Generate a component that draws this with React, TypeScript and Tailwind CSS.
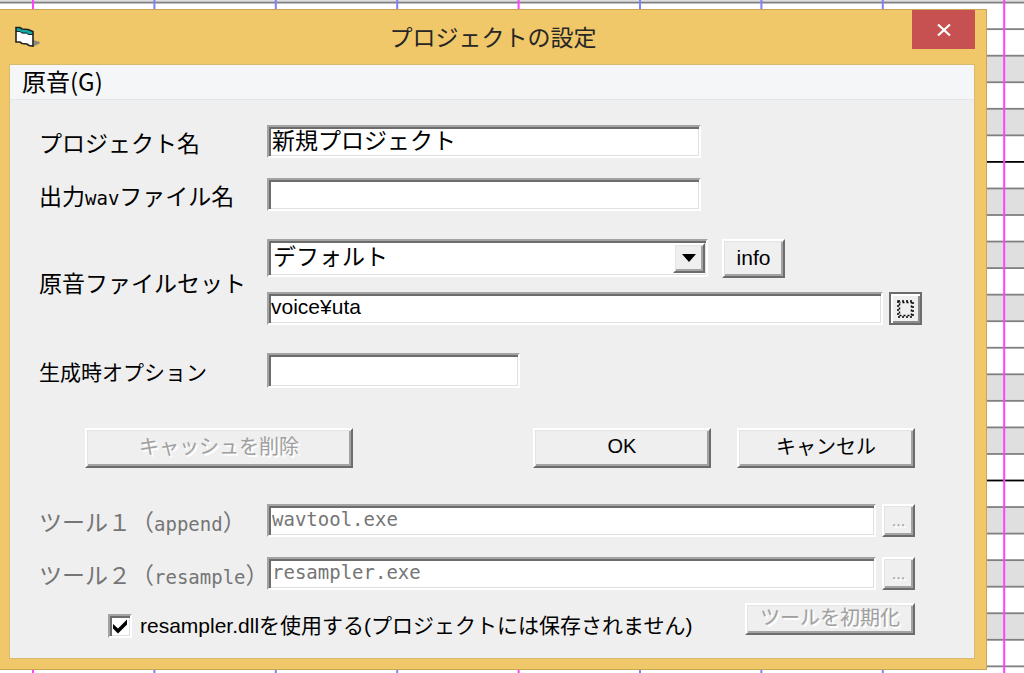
import React, { useState } from 'react';

const SUNKEN =
  'bg-white border-2 border-t-[#a3a3a3] border-l-[#a3a3a3] border-r-white border-b-white shadow-[inset_2px_2px_0_#6c6c6c,inset_-1px_-1px_0_#e0e0e0] outline-none';
const RAISED =
  'bg-[#efefef] border-2 border-t-white border-l-white border-r-[#6c6c6c] border-b-[#6c6c6c] shadow-[inset_1px_1px_0_#e3e3e3,inset_-2px_-2px_0_#a3a3a3]';
const DISABLED = 'text-[#a0a0a0] [text-shadow:2px_2px_0_#fff]';
const LABEL = 'h-7 w-[228px] shrink-0 whitespace-nowrap';
const LATIN = "font-['Liberation_Sans','Noto_Sans_CJK_JP',sans-serif]";
const MONO = "font-['DejaVu_Sans_Mono','Noto_Sans_CJK_JP',monospace] text-[19px]";

const ROW_HEIGHT = 26.55;
const SHADED_ROWS = [-1, 2, 4, 7, 9, 11, 14, 16, 19, 21, 23];
const OCTAVE_LINES = [6, 18];

const PianoRoll: React.FC = () => (
  <svg className="absolute inset-0 w-full h-full" aria-hidden="true">
    <rect width="100%" height="100%" fill="#fff" />
    {SHADED_ROWS.map((row) => (
      <rect key={row} x="0" y={2.5 + row * ROW_HEIGHT} width="100%" height={ROW_HEIGHT} fill="#dfdfdf" />
    ))}
    {Array.from({ length: 26 }, (_, i) => (
      <rect
        key={i}
        x="0"
        y={1.7 + i * ROW_HEIGHT}
        width="100%"
        height="1.8"
        fill={OCTAVE_LINES.includes(i) ? '#000' : '#808080'}
      />
    ))}
    {Array.from({ length: 9 }, (_, i) => (
      <rect
        key={i}
        x={32 + i * 121.4}
        y="0"
        width="2"
        height="100%"
        fill={i % 4 === 0 ? '#ff40ff' : '#8080ff'}
      />
    ))}
  </svg>
);

const FormIcon: React.FC = () => (
  <svg width="26" height="24" viewBox="0 0 26 24" aria-hidden="true">
    <path d="M19 15 L26 17 L25 19 L20 21 Z" fill="#8e8878" />
    <path d="M2 2.500 H6 L8 4 L14 4.500 L19 6.500 V21 L15 20.500 L13 19 L8 18.500 L6 17 H2 Z" fill="#fff" />
    <path d="M2 2.500 H6 L8 4 L14 4.500 L19 6.500 V10 H14.500 L12.500 8.500 H8 L6 6.500 H2 Z" fill="#10aaa6" />
    <path d="M2 6.500 H6 L8 8 H12.500 L14.500 9.500 H19" fill="none" stroke="#222" strokeWidth="1" />
    <path d="M2 2.500 H6 L8 4 L14 4.500 L19 6.500 V21 L15 20.500 L13 19 L8 18.500 L6 17 H2 Z" fill="none" stroke="#222" strokeWidth="1.600" />
  </svg>
);

// Dotted focus rectangle around the missing caption of the browse button
const FocusBox: React.FC = () => (
  <svg width="17" height="18" viewBox="0 0 17 18" aria-hidden="true">
    <rect x="1" y="1" width="15" height="16" fill="none" stroke="#000" strokeWidth="1.500" strokeDasharray="2 2" />
    <rect x="2.500" y="2.500" width="12" height="13" fill="none" stroke="#000" strokeWidth="1.500" strokeDasharray="2 2" strokeDashoffset="1" />
  </svg>
);

interface ToolRowProps {
  id: string;
  name: string;
  kind: string;
  value: string;
}

const ToolRow: React.FC<ToolRowProps> = ({ id, name, kind, value }) => (
  <div className="flex items-center pr-[7px]">
    <label htmlFor={id} className={`${LABEL} text-[#757575]`}>
      {name}（<span className={MONO}>{kind}</span>）
    </label>
    <input id={id} disabled defaultValue={value} className={`${SUNKEN} ${MONO} h-[33px] min-w-0 flex-1 px-[3px] pb-1 text-[#757575]`} />
    <button disabled className={`${RAISED} ${DISABLED} ${LATIN} ml-1.5 h-[33px] w-[33px] shrink-0 text-base leading-6`}>
      ...
    </button>
  </div>
);

const App: React.FC = () => {
  const [project, setProject] = useState('新規プロジェクト');
  const [output, setOutput] = useState('');
  const [voice, setVoice] = useState('voice¥uta');
  const [options, setOptions] = useState('');

  return (
    <div className="relative min-h-screen overflow-hidden pt-[9px] font-['Noto_Sans_CJK_JP',sans-serif] text-[23px] leading-7 text-black">
      <PianoRoll />

      <main className="relative mr-[37px] border-y border-r border-[#c9a555] bg-[#f0c869] pl-[9px] pr-[11px] pb-[10px]">
        <header className="flex h-[54px]">
          <div className="w-[65px] shrink-0 pt-[15px] pl-[5px]">
            <FormIcon />
          </div>
          <h1 className="flex-1 self-center pb-0.5 text-center text-[#262626]">プロジェクトの設定</h1>
          <button aria-label="閉じる" className="flex h-[39px] w-[63px] shrink-0 items-center justify-center bg-[#c75050]">
            <svg width="14" height="12" viewBox="0 0 14 12" aria-hidden="true">
              <path d="M1 0.500 L13 11.500 M13 0.500 L1 11.500" stroke="#fff" strokeWidth="2.200" />
            </svg>
          </button>
        </header>

        <div className="border border-[#d8b970] bg-[#efefef]">
          <nav className="h-[35px] border-b border-[#e3e5e8] bg-[#f5f6f8] pl-3">
            <button className="block h-8 text-2xl leading-8">原音(G)</button>
          </nav>

          <form onSubmit={(e) => e.preventDefault()} className="pt-[25px] pr-[52px] pb-5 pl-[29px]">
            <div className="flex items-center">
              <label htmlFor="project" className={LABEL}>プロジェクト名</label>
              <input
                id="project"
                value={project}
                onChange={(e) => setProject(e.target.value)}
                className={`${SUNKEN} h-[33px] w-[434px] px-[3px] pb-1.5`}
              />
            </div>

            <div className="mt-5 flex items-center">
              <label htmlFor="output" className={LABEL}>
                出力<span className={MONO}>wav</span>ファイル名
              </label>
              <input
                id="output"
                value={output}
                onChange={(e) => setOutput(e.target.value)}
                className={`${SUNKEN} h-[33px] w-[434px] px-[3px] pb-1.5`}
              />
            </div>

            <div className="mt-7 flex items-center">
              <label htmlFor="voiceset" className={LABEL}>原音ファイルセット</label>
              <div className="min-w-0 flex-1">
                <div className="flex">
                  <div className="relative w-[441px]">
                    <select id="voiceset" className={`${SUNKEN} block h-[38px] w-full appearance-none px-1 pb-1.5`}>
                      <option>デフォルト</option>
                    </select>
                    <span className={`${RAISED} pointer-events-none absolute top-1 right-[3px] flex h-[30px] w-8 items-center justify-center`}>
                      <svg width="14" height="8" viewBox="0 0 14 8" aria-hidden="true">
                        <path d="M0 0 H14 L7 8 Z" fill="#000" />
                      </svg>
                    </span>
                  </div>
                  <button className={`${RAISED} ${LATIN} ml-3.5 h-[39px] w-[63px] pb-0.5 text-[21px]`}>info</button>
                </div>
                <div className="mt-3.5 flex">
                  <input
                    aria-label="原音フォルダ"
                    value={voice}
                    onChange={(e) => setVoice(e.target.value)}
                    className={`${SUNKEN} ${LATIN} h-[33px] min-w-0 flex-1 px-0.5 pb-1 text-[21px]`}
                  />
                  <button
                    aria-label="参照"
                    className="ml-1.5 flex h-[33px] w-[33px] shrink-0 items-center justify-center border-2 border-[#6c6c6c] bg-[#efefef] shadow-[inset_2px_2px_0_#fff,inset_-2px_-2px_0_#8c8c8c]"
                  >
                    <FocusBox />
                  </button>
                </div>
              </div>
            </div>

            <div className="mt-7 flex items-center">
              <label htmlFor="options" className={`${LABEL} text-[21px]`}>生成時オプション</label>
              <input
                id="options"
                value={options}
                onChange={(e) => setOptions(e.target.value)}
                className={`${SUNKEN} h-[35px] w-[253px] px-[3px] pb-1.5`}
              />
            </div>

            <div className="mt-10 flex pr-[7px] pl-[46px] text-xl">
              <button disabled className={`${RAISED} ${DISABLED} h-10 w-[268px] pb-1`}>キャッシュを削除</button>
              <button className={`${RAISED} ${LATIN} ml-auto h-10 w-[178px] pb-1`}>OK</button>
              <button className={`${RAISED} ml-[26px] h-10 w-[178px] pb-1`}>キャンセル</button>
            </div>

            <div className="mt-9 flex flex-col gap-5">
              <ToolRow id="tool1" name="ツール１" kind="append" value="wavtool.exe" />
              <ToolRow id="tool2" name="ツール２" kind="resample" value="resampler.exe" />
            </div>

            <div className="mt-[13px] flex items-start justify-between pr-[7px] pl-[69px]">
              <label className="mt-[11px] flex h-6 items-center gap-2 text-[21px] whitespace-nowrap">
                <span className="relative h-6 w-6 shrink-0">
                  <input type="checkbox" defaultChecked className={`${SUNKEN} peer block h-6 w-6 appearance-none`} />
                  <svg
                    className="pointer-events-none absolute top-[5px] left-[5px] hidden peer-checked:block"
                    width="15"
                    height="15"
                    viewBox="0 0 15 15"
                    aria-hidden="true"
                  >
                    <path d="M0 5 L5 9.500 L14 0.500 V5.500 L5 14.500 L0 9.500 Z" fill="#000" />
                  </svg>
                </span>
                <span className={LATIN}>resampler.dllを使用する(プロジェクトには保存されません)</span>
              </label>
              <button disabled className={`${RAISED} ${DISABLED} h-8 w-[170px] shrink-0 pb-1.5 text-xl leading-6`}>
                ツールを初期化
              </button>
            </div>
          </form>
        </div>
      </main>
    </div>
  );
};

export default App;
